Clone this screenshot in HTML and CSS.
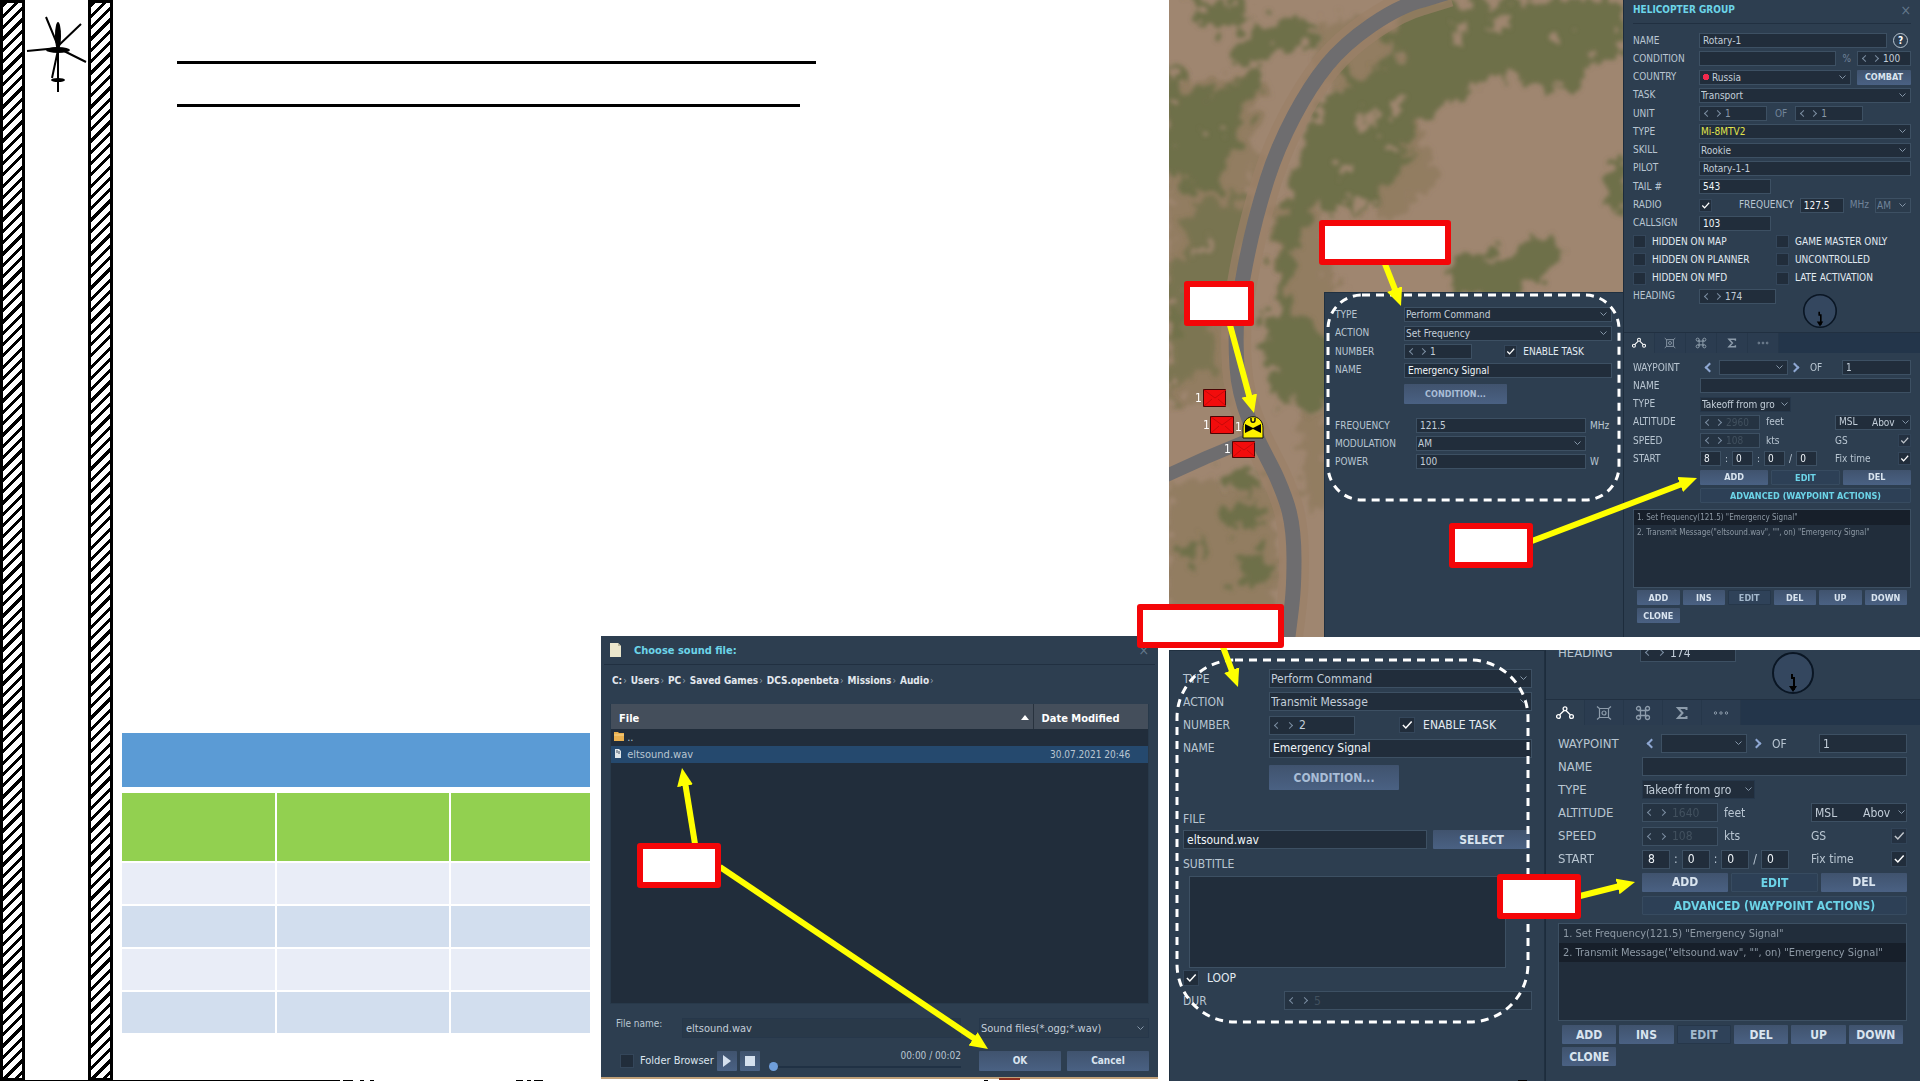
FILE: index.html
```html
<!DOCTYPE html>
<html lang="en">
<head>
<meta charset="utf-8">
<title>Helicopter Group</title>
<link rel="stylesheet" href="styles.css">
</head>
<body>
<svg class="defs" aria-hidden="true">
  <symbol id="i-route" viewBox="0 0 18 14"><g fill="none" stroke="currentColor" stroke-width="1.300"><circle cx="2.500" cy="10.500" r="1.900"/><circle cx="15.500" cy="10.500" r="1.900"/><circle cx="9" cy="2.800" r="1.900"/><path d="M3.500 9 8 4.500M10 4.500 14.500 9"/></g></symbol>
  <symbol id="i-target" viewBox="0 0 16 16"><g fill="none" stroke="currentColor" stroke-width="1.200"><path d="M4 3.500h8M4 12.500h8M3.500 4v8M12.500 4v8M1 1.500l3 2.500M15 1.500 12 4M1 14.500 4 12M15 14.500 12 12"/><circle cx="8" cy="8" r="2"/></g></symbol>
  <symbol id="i-cmd" viewBox="0 0 16 16"><g fill="none" stroke="currentColor" stroke-width="1.300"><path d="M5.500 3.500v9M10.500 3.500v9M3.500 5.500h9M3.500 10.500h9"/><circle cx="3.500" cy="3.500" r="2"/><circle cx="12.500" cy="3.500" r="2"/><circle cx="3.500" cy="12.500" r="2"/><circle cx="12.500" cy="12.500" r="2"/></g></symbol>
  <symbol id="i-sum" viewBox="0 0 16 16"><path d="M12.500 5V3H4l4.500 5L4 13h8.500v-2" fill="none" stroke="currentColor" stroke-width="2"/></symbol>
  <symbol id="i-dots" viewBox="0 0 16 16"><g fill="none" stroke="currentColor"><circle cx="2.500" cy="8" r="1.200"/><circle cx="8" cy="8" r="1.200"/><circle cx="13.500" cy="8" r="1.200"/></g></symbol>
  <symbol id="i-dial" viewBox="0 0 42 42"><circle cx="21" cy="21" r="20" fill="#34475f" stroke="#0a1624" stroke-width="2"/><path d="M20 22v4h2v12" fill="none" stroke="#000" stroke-width="2"/><path d="M17 34h8l-4 6z"/></symbol>
</svg>

<main class="slide">
  <aside class="rail">
    <div class="hatch"></div>
    <svg class="heli" viewBox="0 0 63 100" aria-label="Helicopter">
      <g stroke="#000" stroke-width="2" fill="none"><path d="M33 46 21 17M33 46 56 24M33 48 2 51M37 50 61 62M33 50 27 78M33 50v36M33 84v8"/></g>
      <ellipse cx="33" cy="36" rx="3" ry="14"/><ellipse cx="33" cy="50" rx="12" ry="3"/><ellipse cx="33" cy="80" rx="7" ry="2"/>
    </svg>
    <div class="hatch"></div>
  </aside>

  <section class="notes">
    <header class="heading"><hr class="rule"><hr class="rule short"></header>
    <div class="lower">
      <table class="grid">
        <colgroup><col class="c1"><col class="c2"><col class="c3"></colgroup>
        <thead><tr class="title"><th colspan="3"></th></tr><tr class="space"><td colspan="3"></td></tr><tr class="head"><th></th><th></th><th></th></tr></thead>
        <tbody><tr><td></td><td></td><td></td></tr><tr><td></td><td></td><td></td></tr><tr><td></td><td></td><td></td></tr><tr><td></td><td></td><td></td></tr></tbody>
      </table>

      <section class="dialog">
        <header class="dialog-title">
          <svg width="11" height="14" viewBox="0 0 11 14"><path d="M0 0h8l3 3v11H0z" fill="#ebe6cc"/><path d="M8 0v3h3" fill="#bcb79c"/></svg>
          <h2>Choose sound file:</h2><button class="close" aria-label="Close">×</button>
        </header>
        <nav class="crumbs"><a href="#">C:</a><a href="#">Users</a><a href="#">PC</a><a href="#">Saved Games</a><a href="#">DCS.openbeta</a><a href="#">Missions</a><a href="#">Audio</a></nav>
        <div class="files">
          <table>
            <thead><tr><th>File<svg class="sort" width="8" height="5" viewBox="0 0 8 5"><path d="M4 0l4 5H0z" fill="#fff"/></svg></th><th class="date">Date Modified</th></tr></thead>
            <tbody>
              <tr><td><svg width="10" height="9" viewBox="0 0 10 9"><path d="M0 0h4l1 1h5v8H0z" fill="#e9b04f"/><path d="M0 3h10" stroke="#f8d58c"/></svg> ..</td><td></td></tr>
              <tr class="picked"><td><svg width="10" height="9" viewBox="0 0 10 9"><path d="M1 0h4l2 2v7H1z" fill="#dfe6ea"/><path d="M3 1v3M5 2v3" stroke="#456"/></svg> eltsound.wav</td><td class="date">30.07.2021 20:46</td></tr>
            </tbody>
          </table>
        </div>
        <div class="filename">
          <label for="fname">File name:</label><input id="fname" value="eltsound.wav">
          <select aria-label="File type"><option>Sound files(*.ogg;*.wav)</option></select>
        </div>
        <div class="player">
          <input type="checkbox" id="fb"><label for="fb">Folder Browser</label>
          <button class="btn icon" aria-label="Play"><svg width="10" height="12" viewBox="0 0 10 12"><path d="M1 0l8 6-8 6z" fill="#d5e0ee"/></svg></button>
          <button class="btn icon" aria-label="Stop"><svg width="10" height="10"><rect width="10" height="10" fill="#d5e0ee"/></svg></button>
          <div class="seek"><output>00:00 / 00:02</output><input type="range" value="0" aria-label="Position"></div>
          <button class="btn">OK</button><button class="btn">Cancel</button>
        </div>
      </section>
    </div>
  </section>

  <section class="editors">
    <div class="pane compact">
      <svg class="map" viewBox="0 0 454 637" preserveAspectRatio="xMinYMin slice" aria-label="Map">
        <defs>
          <filter id="rough" x="-10%" y="-10%" width="120%" height="120%"><feTurbulence type="fractalNoise" baseFrequency="0.060" numOctaves="3" seed="4"/><feDisplacementMap in="SourceGraphic" scale="44" xChannelSelector="R" yChannelSelector="G"/><feGaussianBlur stdDeviation="2"/></filter>
        </defs>
        <rect width="454" height="637" fill="#9f8670"/>
        <g fill="#857352" filter="url(#rough)"><path d="M0 80h95L60 400H0zM100 200h50l30 180-60 20zM0 480h110v150H0zM130 410h30v100h-20zM150 20h110l-60 70h-60zM180 150l70-30 20 60-60 50z" opacity=".5"/></g>
        <g fill="#6e7048" filter="url(#rough)">
          <path d="M18 0h55l8 22-30 12-20-12zM95 22l50-2 5 20-36 15-50 10-4-16zM0 62l15 25 30 5 45-24-8 36-12 36-20 48-36-2-24-14z"/>
          <path d="M20 204l60-8-10 94-70 50v-80l16-8z" opacity=".7"/>
          <path d="M0 300l40 20 10 60-34-10-16 30z" opacity=".6"/>
          <path d="M158 92l30-20 52-18 60 8 34-14-4 24-50 30-36 24-14 46-36 36-34 6-10-16-22 40-10 60 34 40 30-24v20l-8 60-40 20-30-20-10-40 12-60 4-70 18-60z"/>
          <path d="M215 30l30-30h195l14 16v34l-30 10-16 34-50-12-45-8-40-14-50-6z"/>
          <path d="M285 258l50-6 50-20 10 20-22 26-20 14h-70zM440 170l14-10v60l-14-20zM50 472l40-4 6 20-20 10zM52 514l20-14 24 10-14 22-30-4zM72 560l24-10 8 24-20 22-18-14zM12 544l20-14-8 40z"/>
        </g>
        <g fill="#9f8670" filter="url(#rough)"><circle cx="200" cy="120" r="8"/><circle cx="230" cy="104" r="7"/><circle cx="176" cy="170" r="9"/><circle cx="330" cy="24" r="9"/><circle cx="390" cy="36" r="7"/><circle cx="290" cy="30" r="6"/><circle cx="40" cy="130" r="6"/><circle cx="224" cy="150" r="7"/><circle cx="190" cy="200" r="7"/><circle cx="35" cy="250" r="6"/><circle cx="170" cy="290" r="5"/></g>
        <g fill="none" stroke="#9b8068" stroke-linejoin="round" opacity=".7"><path stroke-width="30" d="M280-8 254 0C222 8 180 38 158 65S112 136 98 180 78 255 74 278s-9 40-6 89 30 88 40 111 17 40 17 81-3 50-7 86"/></g>
        <g fill="none" stroke="#6e6d6f"><path stroke-width="13" d="M-8 478 36 458 84 438"/><path stroke-width="15" d="M280-8 254 0C222 8 180 38 158 65S112 136 98 180 78 255 74 278s-9 40-6 89 30 88 40 111 17 40 17 81-3 50-7 86"/></g>
        <g fill="#f20c0c" stroke="#4a0505"><path d="M34.500 389.500h22v17h-22zM41.500 416.500h23v17h-23zM63.500 441.500h22v16h-22z"/></g>
        <g fill="none" stroke="#c80909"><path d="M35 390l11 8 11-8M35 406l8-7M57 406l-8-7M42 417l11 8 11-8M42 433l8-7M64 433l-8-7M64 442l11 8 11-8M64 457l8-7M86 457l-8-7"/></g>
        <g class="unit-count"><text x="26" y="402">1</text><text x="34" y="429">1</text><text x="66" y="431">1</text><text x="55" y="453">1</text></g>
        <path d="M74 438v-10c0-15 20-15 20 0v10z" fill="#fff200" stroke="#111"/><path d="M76 424l8 4 8-4v9l-8-4-8 4z"/><path d="M82 418v2c0 3 4 3 4 0v-2" fill="none" stroke="#111" stroke-width="1.500"/>
      </svg>

      <form class="action">
        <div class="stack s-action">
          <div class="row"><label for="a1">TYPE</label><select id="a1"><option>Perform Command</option></select></div>
          <div class="row"><label for="a2">ACTION</label><select id="a2"><option>Set Frequency</option></select></div>
          <div class="row"><label for="a3">NUMBER</label><div class="ctl number"><span class="spin"><button type="button" aria-label="Less"></button><button type="button" aria-label="More"></button><input id="a3" value="1"></span><span class="check"><input type="checkbox" id="a4" checked><label for="a4">ENABLE TASK</label></span></div></div>
          <div class="row"><label for="a5">NAME</label><input id="a5" class="bright" value="Emergency Signal"></div>
        </div>
        <button type="button" class="btn condition">CONDITION...</button>
        <div class="stack s-radio">
          <div class="row radio"><label for="a6">FREQUENCY</label><input id="a6" value="121.5"><span>MHz</span></div>
          <div class="row radio"><label for="a7">MODULATION</label><select id="a7"><option>AM</option></select></div>
          <div class="row radio"><label for="a8">POWER</label><input id="a8" value="100"><span>W</span></div>
        </div>
      </form>

      <form class="side">
        <header class="group-title"><h1>HELICOPTER GROUP</h1><button type="button" class="close" aria-label="Close">×</button></header>
        <div class="stack s-group">
          <div class="row"><label for="g1">NAME</label><div class="ctl"><input id="g1" class="grow" value="Rotary-1"><button type="button" class="help">?</button></div></div>
          <div class="row"><label for="g2">CONDITION</label><div class="ctl"><input id="g2" class="grow"><span class="dim">%</span><span class="spin w54"><button type="button" aria-label="Less"></button><button type="button" aria-label="More"></button><input aria-label="Percent" value="100"></span></div></div>
          <div class="row"><label for="g3">COUNTRY</label><div class="ctl"><select id="g3" class="grow flag"><option>Russia</option></select><button type="button" class="btn w54">COMBAT</button></div></div>
          <div class="row"><label for="g4">TASK</label><select id="g4"><option>Transport</option></select></div>
          <div class="row"><label for="g5">UNIT</label><div class="ctl"><span class="spin faint"><button type="button" aria-label="Less"></button><button type="button" aria-label="More"></button><input id="g5" value="1"></span><span class="dim of">OF</span><span class="spin faint"><button type="button" aria-label="Less"></button><button type="button" aria-label="More"></button><input aria-label="Units" value="1"></span></div></div>
          <div class="row"><label for="g6">TYPE</label><select id="g6" class="yellow"><option>Mi-8MTV2</option></select></div>
          <div class="row"><label for="g7">SKILL</label><select id="g7"><option>Rookie</option></select></div>
          <div class="row"><label for="g8">PILOT</label><input id="g8" value="Rotary-1-1"></div>
          <div class="row"><label for="g9">TAIL #</label><input id="g9" class="w72 bright" value="543"></div>
          <div class="row"><label for="g10">RADIO</label><div class="ctl"><input type="checkbox" id="g10" checked><label for="g11" class="push">FREQUENCY</label><input id="g11" class="w44 bright" value="127.5"><span class="dim">MHz</span><select class="w36 dim" aria-label="Modulation"><option>AM</option></select></div></div>
          <div class="row"><label for="g12">CALLSIGN</label><input id="g12" class="w72 bright" value="103"></div>
          <div class="pair"><span class="check"><input type="checkbox" id="h1"><label for="h1">HIDDEN ON MAP</label></span><span class="check"><input type="checkbox" id="h2"><label for="h2">GAME MASTER ONLY</label></span></div>
          <div class="pair"><span class="check"><input type="checkbox" id="h3"><label for="h3">HIDDEN ON PLANNER</label></span><span class="check"><input type="checkbox" id="h4"><label for="h4">UNCONTROLLED</label></span></div>
          <div class="pair"><span class="check"><input type="checkbox" id="h5"><label for="h5">HIDDEN ON MFD</label></span><span class="check"><input type="checkbox" id="h6"><label for="h6">LATE ACTIVATION</label></span></div>
          <div class="row"><label for="g13">HEADING</label><span class="spin heading-spin"><button type="button" aria-label="Less"></button><button type="button" aria-label="More"></button><input id="g13" value="174"></span></div>
        </div>
        <div class="dial"><svg><use href="#i-dial"/></svg></div>
        <nav class="tabs"><button type="button" class="on" aria-label="Route"><svg><use href="#i-route"/></svg></button><button type="button" aria-label="Payload"><svg><use href="#i-target"/></svg></button><button type="button" aria-label="Systems"><svg><use href="#i-cmd"/></svg></button><button type="button" aria-label="Summary"><svg><use href="#i-sum"/></svg></button><button type="button" aria-label="More"><svg><use href="#i-dots"/></svg></button></nav>
        <div class="stack s-way">
          <div class="row"><label for="w1">WAYPOINT</label><div class="ctl"><button type="button" class="arrow" aria-label="Previous"></button><select id="w1" class="wp"></select><button type="button" class="arrow next" aria-label="Next"></button><span>OF</span><input class="end" aria-label="Total" value="1"></div></div>
          <div class="row"><label for="w2">NAME</label><input id="w2"></div>
          <div class="row"><label for="w3">TYPE</label><select id="w3" class="takeoff"><option>Takeoff from gro</option></select></div>
          <div class="row"><label for="w4">ALTITUDE</label><div class="ctl"><span class="spin off"><button type="button" aria-label="Less"></button><button type="button" aria-label="More"></button><input id="w4" value="2960"></span><span>feet</span><span class="end msl">MSL<select aria-label="Reference"><option>Abov</option></select></span></div></div>
          <div class="row"><label for="w5">SPEED</label><div class="ctl"><span class="spin off"><button type="button" aria-label="Less"></button><button type="button" aria-label="More"></button><input id="w5" value="108"></span><span>kts</span><span class="end tick"><label for="w6">GS</label><input type="checkbox" id="w6" class="soft" checked></span></div></div>
          <div class="row"><label for="w7">START</label><div class="ctl time"><input id="w7" value="8">:<input aria-label="Minutes" value="0">:<input aria-label="Seconds" value="0">/<input aria-label="Days" value="0"><span class="end tick"><label for="w8">Fix time</label><input type="checkbox" id="w8" checked></span></div></div>
          <div class="row"><span></span><div class="trio"><button type="button" class="btn">ADD</button><button type="button" class="btn flat">EDIT</button><button type="button" class="btn">DEL</button></div></div>
          <div class="row"><span></span><button type="button" class="btn flat">ADVANCED (WAYPOINT ACTIONS)</button></div>
        </div>
        <ol class="list"><li class="sel">1. Set Frequency(121.5) "Emergency Signal"</li><li>2. Transmit Message("eltsound.wav", "", on) "Emergency Signal"</li></ol>
        <div class="tools"><button type="button" class="btn">ADD</button><button type="button" class="btn">INS</button><button type="button" class="btn muted">EDIT</button><button type="button" class="btn">DEL</button><button type="button" class="btn">UP</button><button type="button" class="btn">DOWN</button><button type="button" class="btn">CLONE</button></div>
      </form>
    </div>

    <div class="pane large">
      <form class="action">
        <div class="stack s-action">
          <div class="row"><label for="b1">TYPE</label><select id="b1"><option>Perform Command</option></select></div>
          <div class="row"><label for="b2">ACTION</label><select id="b2"><option>Transmit Message</option></select></div>
          <div class="row"><label for="b3">NUMBER</label><div class="ctl number"><span class="spin"><button type="button" aria-label="Less"></button><button type="button" aria-label="More"></button><input id="b3" value="2"></span><span class="check"><input type="checkbox" id="b4" checked><label for="b4">ENABLE TASK</label></span></div></div>
          <div class="row"><label for="b5">NAME</label><input id="b5" class="bright" value="Emergency Signal"></div>
        </div>
        <button type="button" class="btn condition">CONDITION...</button>
        <label class="block" for="b6">FILE</label>
        <div class="ctl file"><input id="b6" class="grow bright" value="eltsound.wav"><button type="button" class="btn">SELECT</button></div>
        <label class="block" for="b7">SUBTITLE</label>
        <textarea id="b7"></textarea>
        <span class="check loop"><input type="checkbox" id="b8" checked><label for="b8">LOOP</label></span>
        <div class="row dur"><label for="b9">DUR</label><span class="spin off"><button type="button" aria-label="Less"></button><button type="button" aria-label="More"></button><input id="b9" value="5"></span></div>
      </form>

      <form class="side">
        <div class="cut"><div class="row"><label for="k1">HEADING</label><span class="spin heading-spin"><button type="button" aria-label="Less"></button><button type="button" aria-label="More"></button><input id="k1" value="174"></span></div></div>
        <div class="dial"><svg><use href="#i-dial"/></svg></div>
        <nav class="tabs"><button type="button" class="on" aria-label="Route"><svg><use href="#i-route"/></svg></button><button type="button" aria-label="Payload"><svg><use href="#i-target"/></svg></button><button type="button" aria-label="Systems"><svg><use href="#i-cmd"/></svg></button><button type="button" aria-label="Summary"><svg><use href="#i-sum"/></svg></button><button type="button" aria-label="More"><svg><use href="#i-dots"/></svg></button></nav>
        <div class="stack s-way">
          <div class="row"><label for="v1">WAYPOINT</label><div class="ctl"><button type="button" class="arrow" aria-label="Previous"></button><select id="v1" class="wp"></select><button type="button" class="arrow next" aria-label="Next"></button><span>OF</span><input class="end" aria-label="Total" value="1"></div></div>
          <div class="row"><label for="v2">NAME</label><input id="v2"></div>
          <div class="row"><label for="v3">TYPE</label><select id="v3" class="takeoff"><option>Takeoff from gro</option></select></div>
          <div class="row"><label for="v4">ALTITUDE</label><div class="ctl"><span class="spin off"><button type="button" aria-label="Less"></button><button type="button" aria-label="More"></button><input id="v4" value="1640"></span><span>feet</span><span class="end msl">MSL<select aria-label="Reference"><option>Abov</option></select></span></div></div>
          <div class="row"><label for="v5">SPEED</label><div class="ctl"><span class="spin off"><button type="button" aria-label="Less"></button><button type="button" aria-label="More"></button><input id="v5" value="108"></span><span>kts</span><span class="end tick"><label for="v6">GS</label><input type="checkbox" id="v6" class="soft" checked></span></div></div>
          <div class="row"><label for="v7">START</label><div class="ctl time"><input id="v7" value="8">:<input aria-label="Minutes" value="0">:<input aria-label="Seconds" value="0">/<input aria-label="Days" value="0"><span class="end tick"><label for="v8">Fix time</label><input type="checkbox" id="v8" checked></span></div></div>
          <div class="row"><span></span><div class="trio"><button type="button" class="btn">ADD</button><button type="button" class="btn flat">EDIT</button><button type="button" class="btn">DEL</button></div></div>
          <div class="row"><span></span><button type="button" class="btn flat">ADVANCED (WAYPOINT ACTIONS)</button></div>
        </div>
        <ol class="list"><li>1. Set Frequency(121.5) "Emergency Signal"</li><li class="sel">2. Transmit Message("eltsound.wav", "", on) "Emergency Signal"</li></ol>
        <div class="tools"><button type="button" class="btn">ADD</button><button type="button" class="btn">INS</button><button type="button" class="btn muted">EDIT</button><button type="button" class="btn">DEL</button><button type="button" class="btn">UP</button><button type="button" class="btn">DOWN</button><button type="button" class="btn">CLONE</button></div>
      </form>
    </div>
  </section>

  <svg class="marks" viewBox="0 0 1921 1081" preserveAspectRatio="none" aria-hidden="true">
    <defs><marker id="tip" viewBox="0 0 18 18" refX="18" refY="9" markerWidth="18" markerHeight="18" markerUnits="userSpaceOnUse" orient="auto"><path d="M0 1l18 8-18 8z" fill="#ffff00"/></marker></defs>
    <g fill="none" stroke="#fff" stroke-width="3" stroke-dasharray="8 6"><rect x="1328" y="295" width="291" height="205" rx="34"/><rect x="1177" y="660" width="351" height="362" rx="58"/></g>
    <g fill="none" stroke="#ffff00" stroke-width="6"><path d="M1385 264 1396 292"/><path d="M1230 325 1250 399"/><path d="M1532 541 1682 484"/><path d="M1223 647 1232 671"/><path d="M695 844 685 782"/><path d="M720 867 975 1039"/><path d="M1580 896 1620 886"/></g>
    <g fill="none" stroke="none"><path marker-end="url(#tip)" d="M1385 264 1401 306"/><path marker-end="url(#tip)" d="M1230 325 1254 413"/><path marker-end="url(#tip)" d="M1532 541 1697 478"/><path marker-end="url(#tip)" d="M1223 647 1238 687"/><path marker-end="url(#tip)" d="M695 844 682 768"/><path marker-end="url(#tip)" d="M720 867 988 1049"/><path marker-end="url(#tip)" d="M1580 896 1635 882"/></g>
    <g fill="#fff" stroke="#f40608" stroke-width="6" stroke-linejoin="round"><path d="M1322 223h126v39h-126zM1187 284h64v39h-64zM1452 526h78v39h-78zM1140 607h141v38h-141zM640 846h78v39h-78zM1500 877h78v39h-78z"/></g>
    <path d="M0 1080h340v1H0zM343 1080h10v1h-10zM360 1080h4v1h-4zM370 1080h4v1h-4zM516 1080h7v1h-7zM527 1080h4v1h-4zM534 1080h9v1h-9zM984 1080h4v1h-4zM1518 1080h9v1h-9z"/>
    <path d="M999 1078h21v2h-21z" fill="#8c3020"/>
  </svg>
</main>
</body>
</html>
```
FILE: styles.css
```css
* { box-sizing: border-box; }
body { margin: 0; background: #fff; color: #b9c6d2; font-family: "DejaVu Sans Condensed", "DejaVu Sans", sans-serif; }
button, input, select, textarea { font: inherit; color: inherit; margin: 0; min-width: 0; border-radius: 0; }
button { border: 0; padding: 0; background: none; }
h1, h2, ol { margin: 0; padding: 0; }
.defs { position: absolute; width: 0; height: 0; }

.slide { position: relative; display: grid; grid-template-columns: 113px minmax(0, 1056fr) minmax(0, 752fr); min-height: 100vh; overflow: hidden; }
.marks { position: absolute; inset: 0; width: 100%; height: 1081px; pointer-events: none; }

/* hatched rail with helicopter */
.rail { display: grid; grid-template-columns: 25px 1fr 25px; }
.hatch { border: 3px solid #000; background: repeating-linear-gradient(135deg, #000 0 3px, #fff 3px 8px); }
.heli { width: 63px; height: 100px; }

/* notes column */
.notes { display: flex; flex-direction: column; justify-content: space-between; }
.heading { padding: 61px 353px 0 64px; }
.rule { height: 3px; margin: 0 0 40px; border: 0; background: #000; }
.rule.short { margin-right: 16px; }
.lower { display: grid; grid-template-columns: 468px minmax(0, 1fr); gap: 11px; padding: 0 11px 2px 9px; }
.grid { margin-top: 97px; table-layout: fixed; border-collapse: collapse; width: 100%; align-self: start; }
.grid th, .grid td { padding: 0; border-left: 2px solid #fff; border-bottom: 2px solid #fff; }
.grid th:first-child, .grid td:first-child { border-left: 0; }
.grid .c1 { width: 154px; } .grid .c2 { width: 174px; }
.grid .title { height: 55px; background: #5b9bd5; }
.grid .space { height: 4px; background: #fff; }
.grid .head { height: 70px; background: #92d050; }
.grid tbody tr { height: 43px; background: #e9edf7; }
.grid tbody tr:nth-child(even) { background: #d2deee; }

/* shared controls */
input:not([type]), select, textarea, .spin, .msl { width: 100%; height: var(--field); border: 1px solid #3d5063; background-color: #212d3b; color: #c3ced9; padding: 0 3px; }
select { appearance: none; padding-left: 1px; padding-right: 14px; background-image: url("data:image/svg+xml,%3Csvg xmlns='http://www.w3.org/2000/svg' width='7' height='5'%3E%3Cpath d='M.5.5l3 3 3-3' fill='none' stroke='%238596a8'/%3E%3C/svg%3E"); background-repeat: no-repeat; background-position: right 4px center; }
input.bright { color: #f0f5f9; }
.dim { color: #71849a !important; }
.yellow { color: #e2e44c !important; }
input[type=checkbox] { appearance: none; flex: none; width: var(--box); height: var(--box); background: #212d3b; border: 1px solid #34465a; }
input[type=checkbox]:checked { background: #212d3b url("data:image/svg+xml,%3Csvg xmlns='http://www.w3.org/2000/svg' viewBox='0 0 12 12'%3E%3Cpath d='M2.500 6l2.500 2.500 5-5.500' fill='none' stroke='%23fff' stroke-width='1.300'/%3E%3C/svg%3E") center / contain no-repeat; }
input.soft { opacity: .7; }
.check { display: flex; align-items: center; gap: 6px; color: #e3ebf2; white-space: nowrap; }
.large .check { gap: 8px; }
.btn { height: var(--field); background: linear-gradient(#40536e, #4a6183); border-radius: 1px; color: #d9e4ef; font-size: var(--bold); font-weight: bold; white-space: nowrap; }
.btn.flat { background: #2d4056; border: 1px solid #374b60; color: #6cd4e8; }
.btn.muted { background: #2f4259; border: 1px solid #26374a; color: #a3b8cc; }
.close { color: #64788c; font-size: 14px; line-height: 14px; }
.spin { display: flex; align-items: center; gap: 6px; padding: 0; }
.spin button { flex: none; width: 5px; height: 5px; margin-left: 5px; border: solid #7b8ea2; border-width: 1px 0 0 1px; rotate: -45deg; }
.spin button + button { margin-left: 0; rotate: 135deg; }
.spin input:not([type]) { border: 0; height: 100%; background: none; padding: 0; }
.compact .spin { gap: 5px; }
.large .spin { gap: 7px; }
.spin.faint input:not([type]) { color: #8999a9; }
.spin.off { background: #253342; }
.spin.off input:not([type]) { color: #42515f; }

/* sound file dialog */
.dialog { --field: 20px; --box: 14px; --bold: 10px; display: flex; flex-direction: column; background: #2d3e50; border-bottom: 2px solid #c0a078; font-size: 11px; padding: 0 9px 7px; }
.dialog-title { display: flex; align-items: center; gap: 13px; height: 29px; border-bottom: 1px solid #213041; margin: 0 -6px; padding: 0 6px; }
.dialog-title h2 { font-size: 11px; color: #6cd4e8; flex: 1; }
.crumbs { display: flex; height: 39px; padding: 10px 2px 0; font-size: 10px; font-weight: bold; white-space: nowrap; }
.crumbs a { color: #e2e8ee; text-decoration: none; }
.crumbs a::after { content: "›"; color: #90a0b0; font-weight: normal; margin: 0 4px 0 1px; }
.files { height: 300px; background: #212d3b; border: 1px solid #28394a; border-top: 0; }
.files table { width: 100%; border-collapse: collapse; table-layout: fixed; }
.files th { height: 25px; padding: 3px 8px 0; background: #444e5b; color: #fff; text-align: left; font-size: 11px; }
.files th.date { width: 115px; border-left: 1px solid #28323e; }
.files td { height: 17px; padding: 0 3px; font-size: 11px; line-height: 14px; }
.files td.date { padding-left: 17px; white-space: nowrap; font-size: 10px; }
.files .picked { background: #25496e; }
.sort { float: right; margin-top: 3px; margin-right: -4px; }
.filename { display: grid; grid-template-columns: 72px minmax(0, 1fr) 170px; height: 20px; margin: 14px 0 12px; }
.filename label { padding-left: 6px; font-size: 10px; }
.filename input, .filename select { border-color: #26374a; }
.filename select { background-color: #2b3b4c; }
.filename input:not([type]) { width: auto; margin-right: 18px; background-color: #293949; }
.player { display: grid; grid-template-columns: 14px 71px 20px 20px minmax(0, 1fr) 82px 82px; align-items: center; gap: 6px; height: 20px; padding-left: 10px; }
.player .icon { display: grid; place-items: center; }
.player .icon + .icon { margin-left: -3px; margin-right: 3px; }
.player label { color: #dce5ee; white-space: nowrap; }
.seek { display: flex; flex-direction: column; padding: 0 12px 0 0; }
.seek output { align-self: end; font-size: 10px; line-height: 12px; }
.seek input { appearance: none; width: 100%; height: 9px; background: linear-gradient(#203144, #203144) center / 100% 2px no-repeat; }
.seek input::-webkit-slider-thumb { appearance: none; width: 9px; height: 9px; border-radius: 50%; background: #6f9fdc; }

/* mission editor panes */
.editors { display: flex; flex-direction: column; gap: 13px; padding-right: 1px; }
.pane { position: relative; display: grid; background: #2d3e50; }
.compact { --field: 15px; --box: 13px; --label: 67px; --bold: 9px; grid-template-columns: minmax(0, 1fr) 299px 297px; height: 637px; font-size: 10px; line-height: 14px; }
.large { --field: 19px; --box: 16px; --label: 84px; --bold: 12px; grid-template-columns: minmax(0, 376fr) minmax(0, 375fr); min-height: 431px; font-size: 12px; line-height: 18px; overflow: hidden; }
.map { position: absolute; inset: 0 297px 0 0; width: auto; height: 100%; }
.unit-count { fill: #fff; font-size: 12px; }
.action { position: relative; background: #2d3e50; }
.compact .action { grid-column: 2; margin-top: 292px; padding: 16px 11px 0 10px; border: solid #203040; border-width: 1px 0 0 1px; }
.large .action { padding: 18px 12px 0 13px; border: 1px solid #203040; border-bottom: 0; }
.side { position: relative; background: #2d3e50; border-left: 1px solid #1d2c3c; min-width: 0; }
.compact .side { grid-column: 3; padding: 0 9px; }
.large .side { padding: 0 13px 0 12px; }
.large .row > label { font-size: 13px; }
.large .action .row > label { font-size: 12px; }

.stack { display: grid; align-content: space-between; }
.row { display: grid; grid-template-columns: var(--label) minmax(0, 1fr); align-items: center; height: var(--field); }
.row > label, .ctl > label { white-space: nowrap; }
.ctl { display: flex; align-items: center; gap: 6px; height: var(--field); white-space: nowrap; }
.grow { flex: 1; }
.ctl .w54 { flex: none; width: 54px; }
.w72:not([type]) { width: 72px; }
.ctl .w44:not([type]) { flex: none; width: 44px; }
.ctl select.w36 { flex: none; width: 36px; background-color: #2b3b4c; }
.push { margin-left: auto; }
.of { margin: 0 2px; }

.s-action .row { grid-template-columns: var(--act) minmax(0, 1fr); }
.compact .s-action { --act: 69px; height: 71px; margin-top: -2px; }
.large .s-action { --act: 86px; height: 89px; }
.number { justify-content: space-between; }
.compact .number { padding-right: 28px; }
.compact .number .spin { width: 68px; }
.large .number { padding-right: 36px; }
.large .number .spin { width: 86px; }
.condition { display: block; color: #a9bdd6; }
.compact .condition { width: 103px; height: 20px; margin: 6px 0 14px 69px; }
.large .condition { width: 130px; height: 25px; margin: 7px 0 20px 86px; }
.s-radio { height: 51px; }
.row.radio { grid-template-columns: 81px minmax(0, 1fr) 26px; }
.row.radio span { padding-left: 4px; }
.block { display: block; height: 20px; }
.large .file { gap: 6px; margin-bottom: 6px; }
.file .btn { width: 97px; margin-right: 2px; }
textarea { display: block; resize: none; }
.large textarea { width: calc(100% - 32px); height: 92px; margin: 1px 0 0 6px; }
.loop { height: 20px; }
.row.dur { grid-template-columns: 101px minmax(0, 1fr); margin-top: 3px; }

.group-title { display: flex; justify-content: space-between; align-items: center; height: 24px; padding-bottom: 3px; border-bottom: 1px solid #213041; }
.group-title h1 { font-size: 10px; color: #6cd4e8; }
.s-group { height: 271px; margin-top: 9px; }
.compact .s-group .row { grid-template-columns: 66px minmax(0, 1fr); }
.help { flex: none; width: 15px; height: 15px; margin: 0 3px 0 0; border: 1px solid #b9c6d2; border-radius: 50%; color: #fff; font-weight: bold; line-height: 12px; }
.flag { padding-left: 12px; background-image: radial-gradient(circle at 6px 6px, #f0294d 0 3px, transparent 3px), url("data:image/svg+xml,%3Csvg xmlns='http://www.w3.org/2000/svg' width='7' height='5'%3E%3Cpath d='M.5.5l3 3 3-3' fill='none' stroke='%238596a8'/%3E%3C/svg%3E"); background-position: 0 0, right 4px center; }
.s-group .spin.faint { width: 68px; flex: none; }
.pair { display: grid; grid-template-columns: 143px 1fr; height: 15px; }
.heading-spin { width: 77px; }
.dial { display: flex; }
.compact .dial { height: 28px; }
.compact .dial svg { width: 34px; height: 34px; margin: -10px 0 0 170px; }
.large .cut { height: 12px; overflow: hidden; }
.large .cut .row { grid-template-columns: 82px minmax(0, 1fr); margin-top: -7px; }
.large .heading-spin { width: 96px; }
.large .dial { height: 37px; }
.large .dial svg { width: 42px; height: 42px; margin: -10px 0 0 214px; }

.tabs { display: flex; background: #23354a; margin: 0 -9px; border-top: 1px solid #213041; }
.tabs button { display: grid; place-items: center; background: #2b3c50; border-right: 1px solid #26374a; color: #8d9cab; }
.tabs .on { background: #2d3e50; color: #fff; }
.compact .tabs { height: 21px; }
.compact .tabs button { width: 31px; }
.compact .tabs svg { width: 14px; height: 12px; }
.large .tabs { height: 26px; margin: 0 -13px 0 -12px; }
.large .tabs button { width: 39px; }
.large .tabs svg { width: 18px; height: 16px; }

.compact .s-way { height: 143px; margin-top: 7px; }
.large .s-way { height: 181px; margin-top: 9px; }
.compact .s-way .spin { width: 60px; flex: none; }
.large .s-way .spin { width: 76px; flex: none; }
.end, .ctl input.end:not([type]) { flex: none; margin-left: auto; width: 76px; }
.compact .ctl input.end:not([type]) { width: 69px; }
.large .end { width: 96px; }
.large .ctl input.end:not([type]) { width: 88px; }
.arrow { flex: none; width: 7px; height: 7px; margin: 0 0 0 6px; border: solid #8ea7d2; border-width: 2px 0 0 2px; rotate: -45deg; }
.arrow.next { rotate: 135deg; margin: 0 6px 0 0; }
.compact .arrow.next { margin-left: -3px; }
.ctl select.wp { width: 69px; }
.large .ctl select.wp { width: 86px; }
select.takeoff { width: 91px; border-color: #26374a; padding-right: 8px; background-position: right 2px center; }
.large select.takeoff { width: 113px; }
.msl { display: flex; justify-content: space-between; align-items: center; padding: 0 0 0 3px; }
.msl select { width: 38px; height: 100%; border: 0; padding: 0 6px 0 0; background-position: right 1px center; }
.large .msl select { width: 43px; }
.tick { display: flex; align-items: center; justify-content: space-between; }
.ctl.time { gap: 4px; }
.time > input:not([type]) { flex: none; width: 21px; color: #f0f5f9; }
.large .time > input:not([type]) { width: 28px; padding-left: 5px; }
.trio { display: grid; grid-template-columns: 1fr 1fr 1fr; gap: 3px; }

.list { list-style: none; background: #212d3b; border: 1px solid #3d5063; color: #8d99a5; white-space: nowrap; overflow: hidden; }
.compact .list { height: 79px; margin-top: 6px; font-size: 8px; }
.compact .list li { height: 15px; padding: 0 3px; line-height: 15px; }
.large .list { height: 98px; margin-top: 8px; font-size: 11px; }
.large .list li { height: 19px; padding: 0 4px; line-height: 19px; }
.list .sel { background: #171f2a; }
.tools { display: grid; grid-template-columns: repeat(6, 1fr); }
.compact .tools { gap: 3px; padding: 2px 4px 14px; }
.large .tools { gap: 3px; padding: 4px 4px 15px; }
```
